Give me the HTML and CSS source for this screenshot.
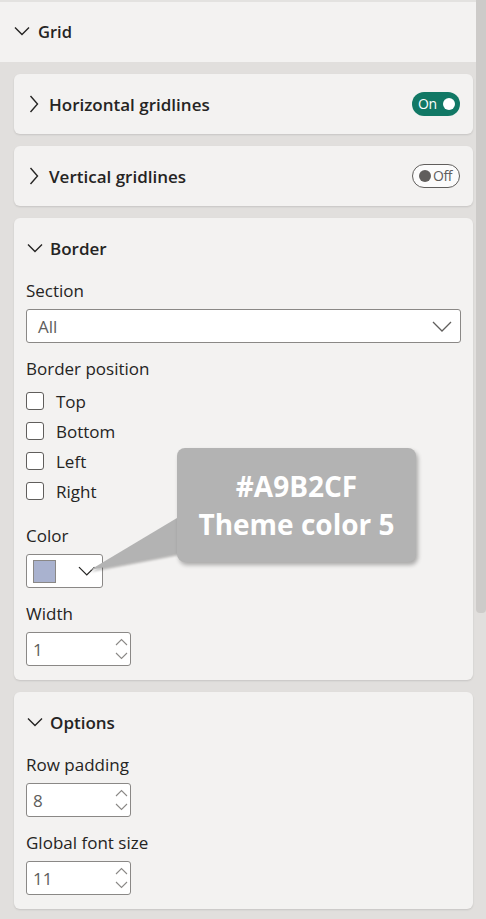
FILE: index.html
```html
<!DOCTYPE html>
<html>
<head>
<meta charset="utf-8">
<link rel="stylesheet" href="styles.css">
</head>
<body>
<div class="app">
  <div class="main">
    <div class="top">
      <svg class="chev-down" width="16" height="10" viewBox="0 0 16 10"><path d="M1 1.5 L8 8.5 L15 1.5" fill="none" stroke="#252423" stroke-width="1.4"/></svg>
      <span class="top-title">Grid</span>
    </div>
    <div class="cards">
      <div class="card">
        <div class="card-head">
          <svg class="chev-right" width="10" height="18" viewBox="0 0 10 18"><path d="M1.5 1 L8.5 9 L1.5 17" fill="none" stroke="#252423" stroke-width="1.4"/></svg>
          <span class="card-title">Horizontal gridlines</span>
          <span class="toggle on"><span class="toggle-text">On</span><span class="knob"></span></span>
        </div>
      </div>
      <div class="card">
        <div class="card-head">
          <svg class="chev-right" width="10" height="18" viewBox="0 0 10 18"><path d="M1.5 1 L8.5 9 L1.5 17" fill="none" stroke="#252423" stroke-width="1.4"/></svg>
          <span class="card-title">Vertical gridlines</span>
          <span class="toggle off"><span class="knob"></span><span class="toggle-text">Off</span></span>
        </div>
      </div>
      <div class="card border-card">
        <div class="card-head">
          <svg class="chev-down-sm" width="16" height="10" viewBox="0 0 16 10"><path d="M1 1.5 L8 8.5 L15 1.5" fill="none" stroke="#252423" stroke-width="1.4"/></svg>
          <span class="card-title">Border</span>
        </div>
        <div class="card-body">
          <div class="field">
            <div class="label">Section</div>
            <div class="select">
              <span class="value">All</span>
              <svg width="20" height="11" viewBox="0 0 20 11"><path d="M1 1 L10 10 L19 1" fill="none" stroke="#605e5c" stroke-width="1.3"/></svg>
            </div>
          </div>
          <div class="field">
            <div class="label">Border position</div>
            <div class="checks">
              <label class="check"><span class="box"></span><span>Top</span></label>
              <label class="check"><span class="box"></span><span>Bottom</span></label>
              <label class="check"><span class="box"></span><span>Left</span></label>
              <label class="check"><span class="box"></span><span>Right</span></label>
            </div>
          </div>
          <div class="field">
            <div class="label">Color</div>
            <div class="color-btn">
              <span class="swatch"></span>
              <svg width="18" height="10" viewBox="0 0 18 10"><path d="M1 1 L9 9 L17 1" fill="none" stroke="#252423" stroke-width="1.3"/></svg>
            </div>
          </div>
          <div class="field">
            <div class="label">Width</div>
            <div class="spin">
              <span class="value">1</span>
              <span class="arrows">
                <svg width="13" height="8" viewBox="0 0 13 8"><path d="M1 7 L6.5 1.5 L12 7" fill="none" stroke="#8a8886" stroke-width="1.1"/></svg>
                <svg width="13" height="8" viewBox="0 0 13 8"><path d="M1 1 L6.5 6.5 L12 1" fill="none" stroke="#8a8886" stroke-width="1.1"/></svg>
              </span>
            </div>
          </div>
        </div>
        <div class="callout">
          <svg class="callout-tail" width="110" height="70" viewBox="0 0 110 70"><path d="M95 12 L3 67 L97 49 Z" fill="#b3b3b3"/></svg>
          <div class="callout-box">#A9B2CF<br>Theme color 5</div>
        </div>
      </div>
      <div class="card">
        <div class="card-head">
          <svg class="chev-down-sm" width="16" height="10" viewBox="0 0 16 10"><path d="M1 1.5 L8 8.5 L15 1.5" fill="none" stroke="#252423" stroke-width="1.4"/></svg>
          <span class="card-title">Options</span>
        </div>
        <div class="card-body">
          <div class="field">
            <div class="label">Row padding</div>
            <div class="spin">
              <span class="value">8</span>
              <span class="arrows">
                <svg width="13" height="8" viewBox="0 0 13 8"><path d="M1 7 L6.5 1.5 L12 7" fill="none" stroke="#8a8886" stroke-width="1.1"/></svg>
                <svg width="13" height="8" viewBox="0 0 13 8"><path d="M1 1 L6.5 6.5 L12 1" fill="none" stroke="#8a8886" stroke-width="1.1"/></svg>
              </span>
            </div>
          </div>
          <div class="field">
            <div class="label">Global font size</div>
            <div class="spin">
              <span class="value">11</span>
              <span class="arrows">
                <svg width="13" height="8" viewBox="0 0 13 8"><path d="M1 7 L6.5 1.5 L12 7" fill="none" stroke="#8a8886" stroke-width="1.1"/></svg>
                <svg width="13" height="8" viewBox="0 0 13 8"><path d="M1 1 L6.5 6.5 L12 1" fill="none" stroke="#8a8886" stroke-width="1.1"/></svg>
              </span>
            </div>
          </div>
        </div>
      </div>
    </div>
  </div>
  <div class="scrollbar"><div class="thumb"></div></div>
</div>
</body>
</html>
```
FILE: styles.css
```css
* { box-sizing: border-box; }
html, body { margin: 0; padding: 0; }
body {
  width: 486px;
  height: 919px;
  overflow: hidden;
  background: #e1dfdd;
  font-family: "Open Sans", "Noto Sans", sans-serif;
  color: #252423;
}
.app { display: flex; height: 919px; }
.main { width: 476px; display: flex; flex-direction: column; }
.top {
  height: 62px;
  background: #f3f2f1;
  border-top: 2px solid #e3e2e0;
  display: flex;
  align-items: center;
  padding-left: 14px;
  padding-bottom: 2px;
}
.chev-down { margin-right: 8px; }
.top-title { font-size: 16.5px; font-weight: 600; }
.cards {
  display: flex;
  flex-direction: column;
  gap: 12px;
  padding: 12px 3px 0 14px;
}
.card {
  background: #f3f2f1;
  border-radius: 6px;
  box-shadow: 0 1px 2px rgba(0,0,0,0.12);
  position: relative;
}
.card-head {
  height: 60px;
  display: flex;
  align-items: center;
  padding: 0 13px 0 13px;
}
.chev-right { margin: 0 10px 0 2px; }
.chev-down-sm { margin-right: 7px; }
.card-title { font-size: 17px; font-weight: 600; flex: 1; }
.toggle {
  width: 48px;
  height: 24px;
  border-radius: 12px;
  display: flex;
  align-items: center;
  font-size: 14px;
}
.toggle.on {
  background: #117865;
  color: #fff;
  padding: 0 5px 0 6px;
  justify-content: space-between;
}
.toggle.on .knob { width: 12px; height: 12px; border-radius: 50%; background: #fff; }
.toggle.off {
  border: 1px solid #605e5c;
  background: #fbfbfb;
  color: #605e5c;
  padding: 0 4px 0 6px;
  gap: 2px;
}
.toggle.off .knob { width: 12px; height: 12px; border-radius: 50%; background: #605e5c; flex: none; }
.toggle-text { line-height: 1; letter-spacing: -0.4px; }
.card-body {
  padding: 2px 12px 14px;
  display: flex;
  flex-direction: column;
  gap: 15px;
}
.label { font-size: 17px; line-height: 22px; margin-bottom: 7px; }
.select {
  height: 34px;
  background: #fff;
  border: 1px solid #8a8886;
  border-radius: 3px;
  display: flex;
  align-items: center;
  justify-content: space-between;
  padding: 0 8px 0 11px;
}
.value { font-size: 17px; color: #605e5c; }
.checks { display: flex; flex-direction: column; margin-top: -1px; margin-bottom: 4px; }
.check { height: 30px; display: flex; align-items: center; font-size: 17px; }
.box {
  width: 18px; height: 18px;
  border: 1px solid #605e5c;
  border-radius: 3px;
  background: #fff;
  margin-right: 12px;
}
.color-btn {
  width: 77px; height: 34px;
  background: #fff;
  border: 1px solid #8a8886;
  border-radius: 3px;
  display: flex;
  align-items: center;
  padding: 0 6px;
  gap: 22px;
}
.swatch {
  width: 24px; height: 23px;
  background: #a9b2cf;
  border: 1px solid #8a8886;
}
.spin {
  width: 105px; height: 34px;
  background: #fff;
  border: 1px solid #8a8886;
  border-radius: 3px;
  display: flex;
  align-items: center;
  justify-content: space-between;
  padding: 0 2px 0 6px;
}
.arrows { display: flex; flex-direction: column; gap: 6px; }
.arrows svg { display: block; }
.callout {
  position: absolute;
  left: 73px;
  top: 230px;
  width: 330px;
  height: 130px;
}
.callout-tail {
  position: absolute;
  left: 0;
  top: 55px;
  filter: drop-shadow(1px 2px 1px rgba(0,0,0,0.25));
}
.callout-box {
  position: absolute;
  left: 90px;
  top: 0;
  width: 239px;
  height: 114px;
  background: #b3b3b3;
  border-radius: 8px;
  box-shadow: 2px 3px 4px rgba(0,0,0,0.3);
  color: #fff;
  font-weight: 700;
  font-size: 28px;
  line-height: 38px;
  text-align: center;
  padding-top: 19px;
}
.scrollbar { width: 10px; background: #e1dfdd; }
.thumb { height: 613px; background: #cdcbc9; border-radius: 0 0 4px 4px; }
```
